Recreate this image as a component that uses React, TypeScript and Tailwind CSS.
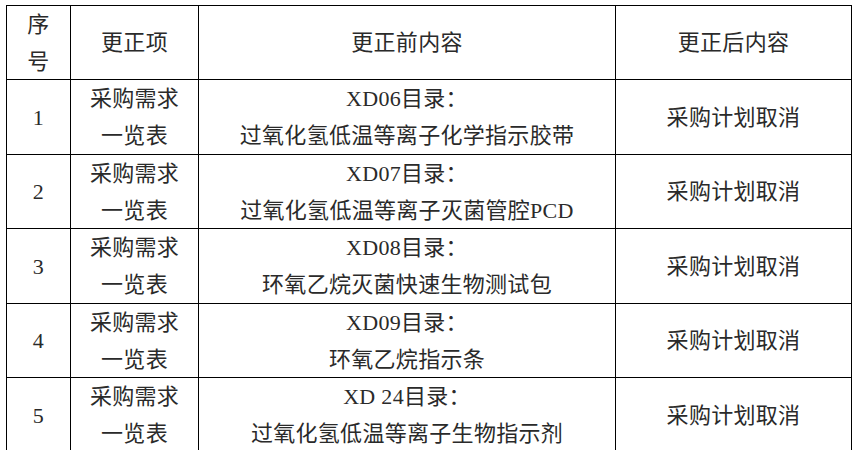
import React from "react";

const rows = [
  { n: "1", a: "XD06目录：", b: "过氧化氢低温等离子化学指示胶带", h: "h-[75px]" },
  { n: "2", a: "XD07目录：", b: "过氧化氢低温等离子灭菌管腔PCD", h: "h-[74px]" },
  { n: "3", a: "XD08目录：", b: "环氧乙烷灭菌快速生物测试包", h: "h-[75px]" },
  { n: "4", a: "XD09目录：", b: "环氧乙烷指示条", h: "h-[74px]" },
  { n: "5", a: "XD 24目录：", b: "过氧化氢低温等离子生物指示剂", h: "h-[75px]" },
];

const cell =
  "border-r border-b border-black flex flex-col items-center justify-center text-center";

export default function App() {
  return (
    <div
      className="w-[855px] h-[450px] overflow-hidden bg-white text-[#2a2a2a] text-[22px] leading-[37px] tracking-[0.3px]"
      style={{ fontFamily: '"Liberation Serif", "Noto Sans CJK SC", serif' }}
    >
      <div className="mt-[5px] ml-[6px] w-[846px] grid grid-cols-[64px_128px_417px_236px] border-l border-t border-black">
        <div className={`${cell} h-[74px]`}>
          <div>序</div>
          <div>号</div>
        </div>
        <div className={`${cell} h-[74px]`}>更正项</div>
        <div className={`${cell} h-[74px]`}>更正前内容</div>
        <div className={`${cell} h-[74px]`}>更正后内容</div>
        {rows.map((r) => (
          <React.Fragment key={r.n}>
            <div className={`${cell} ${r.h}`}>{r.n}</div>
            <div className={`${cell} ${r.h}`}>
              <div>采购需求</div>
              <div>一览表</div>
            </div>
            <div className={`${cell} ${r.h}`}>
              <div>{r.a}</div>
              <div>{r.b}</div>
            </div>
            <div className={`${cell} ${r.h}`}>采购计划取消</div>
          </React.Fragment>
        ))}
      </div>
    </div>
  );
}
